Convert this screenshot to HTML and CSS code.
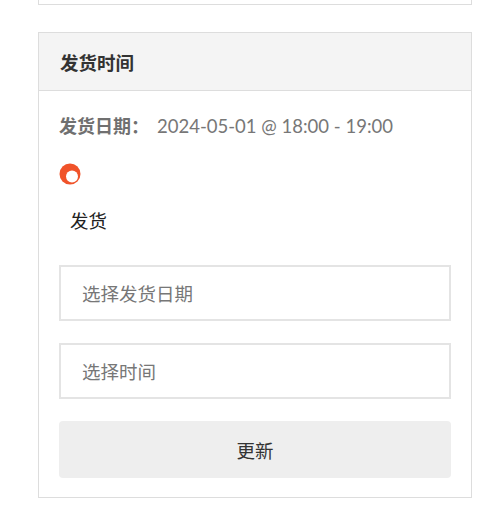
FILE: index.html
```html
<!DOCTYPE html>
<html lang="zh">
<head>
<meta charset="utf-8">
<link rel="stylesheet" href="styles.css">
</head>
<body>
<div class="page">
  <div class="prev-card"></div>
  <section class="card">
    <header class="card-head">发货时间</header>
    <div class="card-body">
      <div class="date-row"><span class="date-label">发货日期：</span><span class="date-value">2024-05-01 @ 18:00 - 19:00</span></div>
      <div class="radio-row">
        <svg class="radio" width="22" height="22" viewBox="0 0 22 22"><circle cx="11" cy="11" r="10.5" fill="#f0532a"/><circle cx="13" cy="13.5" r="6" fill="#fff"/></svg>
      </div>
      <div class="radio-label">发货</div>
      <div class="field">选择发货日期</div>
      <div class="field">选择时间</div>
      <button class="btn">更新</button>
    </div>
  </section>
</div>
</body>
</html>
```
FILE: styles.css
```css
html, body {
  margin: 0;
  padding: 0;
  background: #fff;
}
body {
  font-family: Lato, "Noto Sans CJK SC", sans-serif;
}
.page {
  padding-left: 38px;
  width: 434px;
}
.prev-card {
  height: 4px;
  border: 1px solid #dddddd;
  border-top: none;
}
.card {
  margin-top: 27px;
  border: 1px solid #dddddd;
}
.card-head {
  height: 57px;
  background: #f4f4f4;
  border-bottom: 1px solid #dddddd;
  display: flex;
  align-items: center;
  padding-left: 21px;
  font-size: 18.5px;
  font-weight: bold;
  color: #333;
}
.card-body {
  padding: 23px 20px 19px 20px;
}
.date-row {
  line-height: 24px;
  height: 24px;
  display: flex;
  align-items: center;
}
.date-label {
  font-size: 18px;
  font-weight: bold;
  color: #707070;
  margin-right: 8px;
}
.date-value {
  color: #777;
  font-size: 18.5px;
}
.radio-row {
  margin-top: 25px;
  height: 22px;
}
.radio {
  display: block;
}
.radio-label {
  margin-top: 24px;
  line-height: 24px;
  font-size: 18.5px;
  color: #222;
  padding-left: 11px;
}
.field {
  margin-top: 32px;
  height: 52px;
  border: 2px solid #e4e4e4;
  display: flex;
  align-items: center;
  padding-left: 21px;
  font-size: 18.5px;
  color: #777;
}
.field + .field {
  margin-top: 22px;
}
.btn {
  display: block;
  margin-top: 22px;
  width: 100%;
  height: 57px;
  border: none;
  border-radius: 4px;
  background: #eeeeee;
  font-family: Lato, "Noto Sans CJK SC", sans-serif;
  font-size: 18.5px;
  color: #333;
  padding: 0;
}
```
